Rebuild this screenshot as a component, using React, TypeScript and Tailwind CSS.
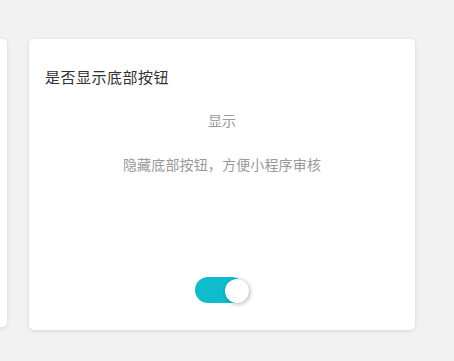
export default function App() {
  return (
    <div
      className="flex h-[361px] w-[454px] items-start gap-[22px] overflow-hidden bg-[#f2f2f2] pt-[39px]"
      style={{ fontFamily: '"Noto Sans CJK SC", "Noto Sans", sans-serif' }}
    >
      <div className="ml-[-300px] h-[288px] w-[307px] shrink-0 rounded-[5px] bg-white shadow-[0_1px_4px_rgba(0,0,0,0.12)]" />
      <div className="flex h-[291px] w-[386px] shrink-0 flex-col rounded-[5px] bg-white shadow-[0_1px_4px_rgba(0,0,0,0.12)]">
        <div className="pl-[16px] pt-[27px] text-[15px] leading-[22px] tracking-[0.5px] text-[#333]">是否显示底部按钮</div>
        <div className="mt-[22px] text-center text-[14px] leading-[20px] text-[#999]">显示</div>
        <div className="mt-[24px] text-center text-[14px] leading-[20px] tracking-[0.15px] text-[#999]">
          隐藏底部按钮，方便小程序审核
        </div>
        <div className="mt-auto mb-[27px] flex justify-center">
          <button className="relative mr-[4px] h-[26px] w-[50px] rounded-full bg-[#0fbccd]">
            <span className="absolute right-[-4px] top-[2px] h-[24px] w-[24px] rounded-full bg-white shadow-[1px_1px_4px_rgba(0,0,0,0.3)]" />
          </button>
        </div>
      </div>
    </div>
  )
}
